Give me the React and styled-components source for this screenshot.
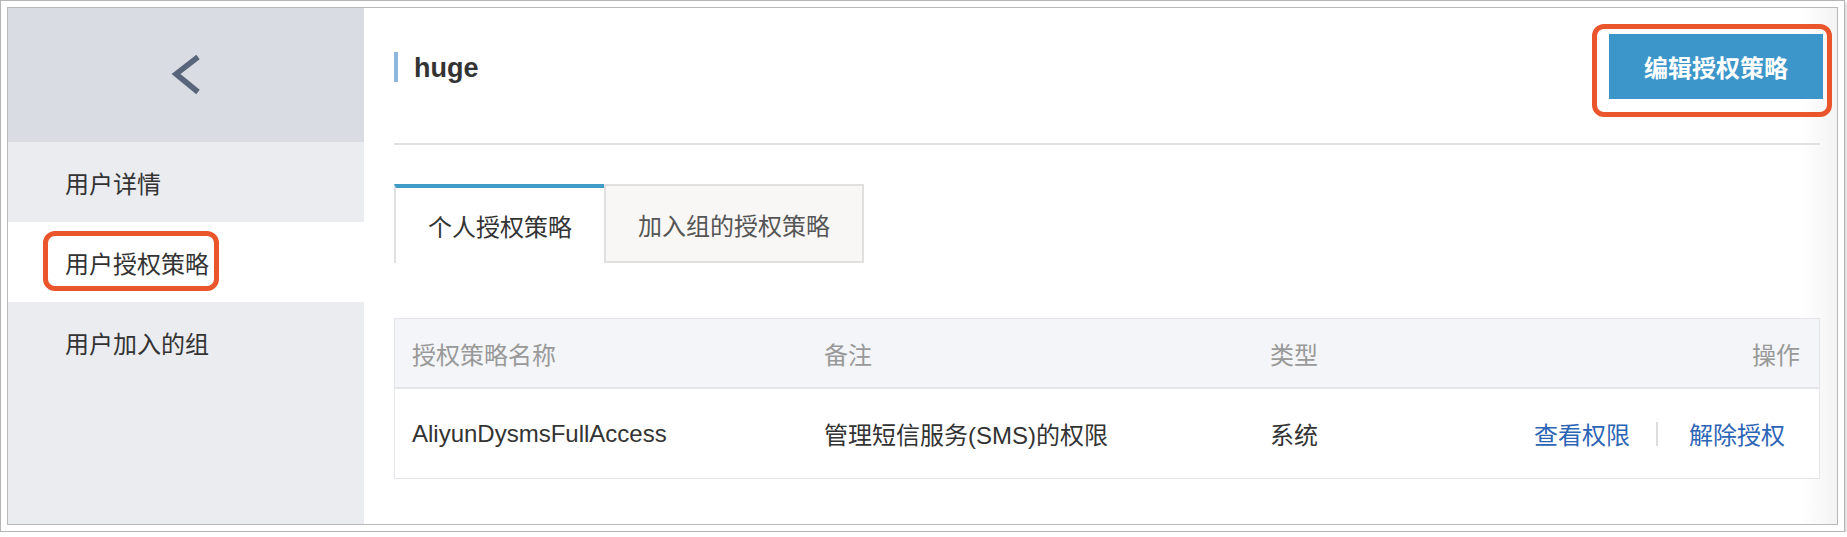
import React from 'react'
import styled, { createGlobalStyle } from 'styled-components'

const GlobalStyle = createGlobalStyle`
    body {
        margin: 0;
        background: #ffffff;
        font-family: "Liberation Sans", "Noto Sans CJK SC", sans-serif;
    }
    * {
        box-sizing: border-box;
    }
`

const policies = [
    { name: 'AliyunDysmsFullAccess', note: '管理短信服务(SMS)的权限', type: '系统' },
]

function App() {
    return (
        <>
            <GlobalStyle />
            <Window>
                <Frame>
                    <Sidebar>
                        <BackBar>
                            <svg width="40" height="50" viewBox="0 0 40 50">
                                <polyline points="31,7 9,24 31,42" fill="none" stroke="#58657a" strokeWidth="5.5" />
                            </svg>
                        </BackBar>
                        <NavItem>用户详情</NavItem>
                        <NavItem active>
                            用户授权策略
                            <NavMark />
                        </NavItem>
                        <NavItem>用户加入的组</NavItem>
                    </Sidebar>

                    <Main>
                        <HeaderRow>
                            <Title>huge</Title>
                            <EditButton>
                                编辑授权策略
                                <ButtonMark />
                            </EditButton>
                        </HeaderRow>
                        <Divider />

                        <Tabs>
                            <Tab active>个人授权策略</Tab>
                            <Tab>加入组的授权策略</Tab>
                        </Tabs>

                        <Table>
                            <HeadRow>
                                <Cell>授权策略名称</Cell>
                                <Cell>备注</Cell>
                                <Cell>类型</Cell>
                                <Cell right>操作</Cell>
                            </HeadRow>
                            {policies.map(p => (
                                <BodyRow key={p.name}>
                                    <Cell>{p.name}</Cell>
                                    <Cell>{p.note}</Cell>
                                    <Cell>{p.type}</Cell>
                                    <Cell right inset>
                                        <Link>查看权限</Link>
                                        <Sep />
                                        <Link>解除授权</Link>
                                    </Cell>
                                </BodyRow>
                            ))}
                        </Table>
                    </Main>
                </Frame>
            </Window>
        </>
    )
}

export default App

const Window = styled.div`
    width: 1845px;
    height: 532px;
    border: 1px solid #b4b4b4;
    padding: 6px;
    background: #fff;
    box-shadow: 1px 3px 4px rgba(0, 0, 0, 0.22);
`

const Frame = styled.div`
    display: flex;
    height: 100%;
    border: 1px solid #b9b9b9;
`

const Sidebar = styled.div`
    width: 356px;
    flex-shrink: 0;
    display: flex;
    flex-direction: column;
    background: #ebecf0;
`

const BackBar = styled.div`
    height: 134px;
    background: #d9dce3;
    display: flex;
    align-items: center;
    justify-content: center;
    padding-left: 2px;
`

const NavItem = styled.div`
    position: relative;
    height: 80px;
    display: flex;
    align-items: center;
    padding-left: 57px;
    font-size: 24px;
    color: #333;
    background: ${props => props.active ? '#ffffff' : 'transparent'};
    &:first-of-type {
        height: 81px;
    }
`

const NavMark = styled.span`
    position: absolute;
    left: 35px;
    top: 9px;
    width: 176px;
    height: 60px;
    border: 5px solid #ea552b;
    border-radius: 12px;
`

const Main = styled.div`
    flex: 1;
    display: flex;
    flex-direction: column;
    padding: 26px 17px 0 30px;
    background: linear-gradient(to right, #ffffff calc(100% - 36px), #f3f3f3);
`

const HeaderRow = styled.div`
    height: 65px;
    display: flex;
    align-items: center;
    justify-content: space-between;
    margin-bottom: 44px;
`

const Title = styled.h1`
    margin: 0;
    display: flex;
    align-items: center;
    height: 30px;
    border-left: 4px solid #8db7dc;
    padding: 4px 0 0 16px;
    font-size: 27px;
    font-weight: bold;
    color: #333;
    line-height: 1;
`

const EditButton = styled.button`
    position: relative;
    width: 214px;
    height: 65px;
    margin-right: -3px;
    border: none;
    background: #3d96c9;
    color: #fff;
    font-family: "Liberation Sans", "Noto Sans CJK SC", sans-serif;
    font-size: 24px;
    font-weight: bold;
    cursor: pointer;
`

const ButtonMark = styled.span`
    position: absolute;
    left: -17px;
    top: -10px;
    width: 240px;
    height: 93px;
    border: 5px solid #ea552b;
    border-radius: 12px;
`

const Divider = styled.div`
    height: 2px;
    background: #e1e1e1;
`

const Tabs = styled.div`
    display: flex;
    margin-top: 39px;
    height: 79px;
`

const Tab = styled.div`
    display: flex;
    align-items: center;
    padding: 0 32px;
    font-size: 24px;
    color: ${props => props.active ? '#333' : '#555'};
    background: ${props => props.active ? '#fff' : '#f8f7f6'};
    border: 2px solid #e0e0e0;
    border-top: ${props => props.active ? '4px solid #3f9cc6' : '2px solid #e0e0e0'};
    border-right: ${props => props.active ? 'none' : '2px solid #e0e0e0'};
    border-bottom: ${props => props.active ? 'none' : '2px solid #e0e0e0'};
    padding-top: ${props => props.active ? '0' : '2px'};
`

const Table = styled.div`
    margin-top: 55px;
    border: 1px solid #e3e5e9;
`

const HeadRow = styled.div`
    display: grid;
    grid-template-columns: 412px 446px 1fr auto;
    align-items: center;
    height: 70px;
    padding: 0 19px 0 17px;
    background: #f4f5f8;
    border-bottom: 2px solid #e3e5e9;
    color: #999;
    font-size: 24px;
`

const BodyRow = styled(HeadRow)`
    height: 89px;
    background: #fff;
    border-bottom: none;
    color: #333;
`

const Cell = styled.div`
    display: flex;
    align-items: center;
    justify-content: ${props => props.right ? 'flex-end' : 'flex-start'};
    padding-right: ${props => props.inset ? '15px' : '0'};
    white-space: nowrap;
`

const Link = styled.a`
    color: #2c64b6;
    cursor: pointer;
`

const Sep = styled.span`
    width: 2px;
    height: 24px;
    background: #dcdcdc;
    margin: 0 31px 0 26px;
`
